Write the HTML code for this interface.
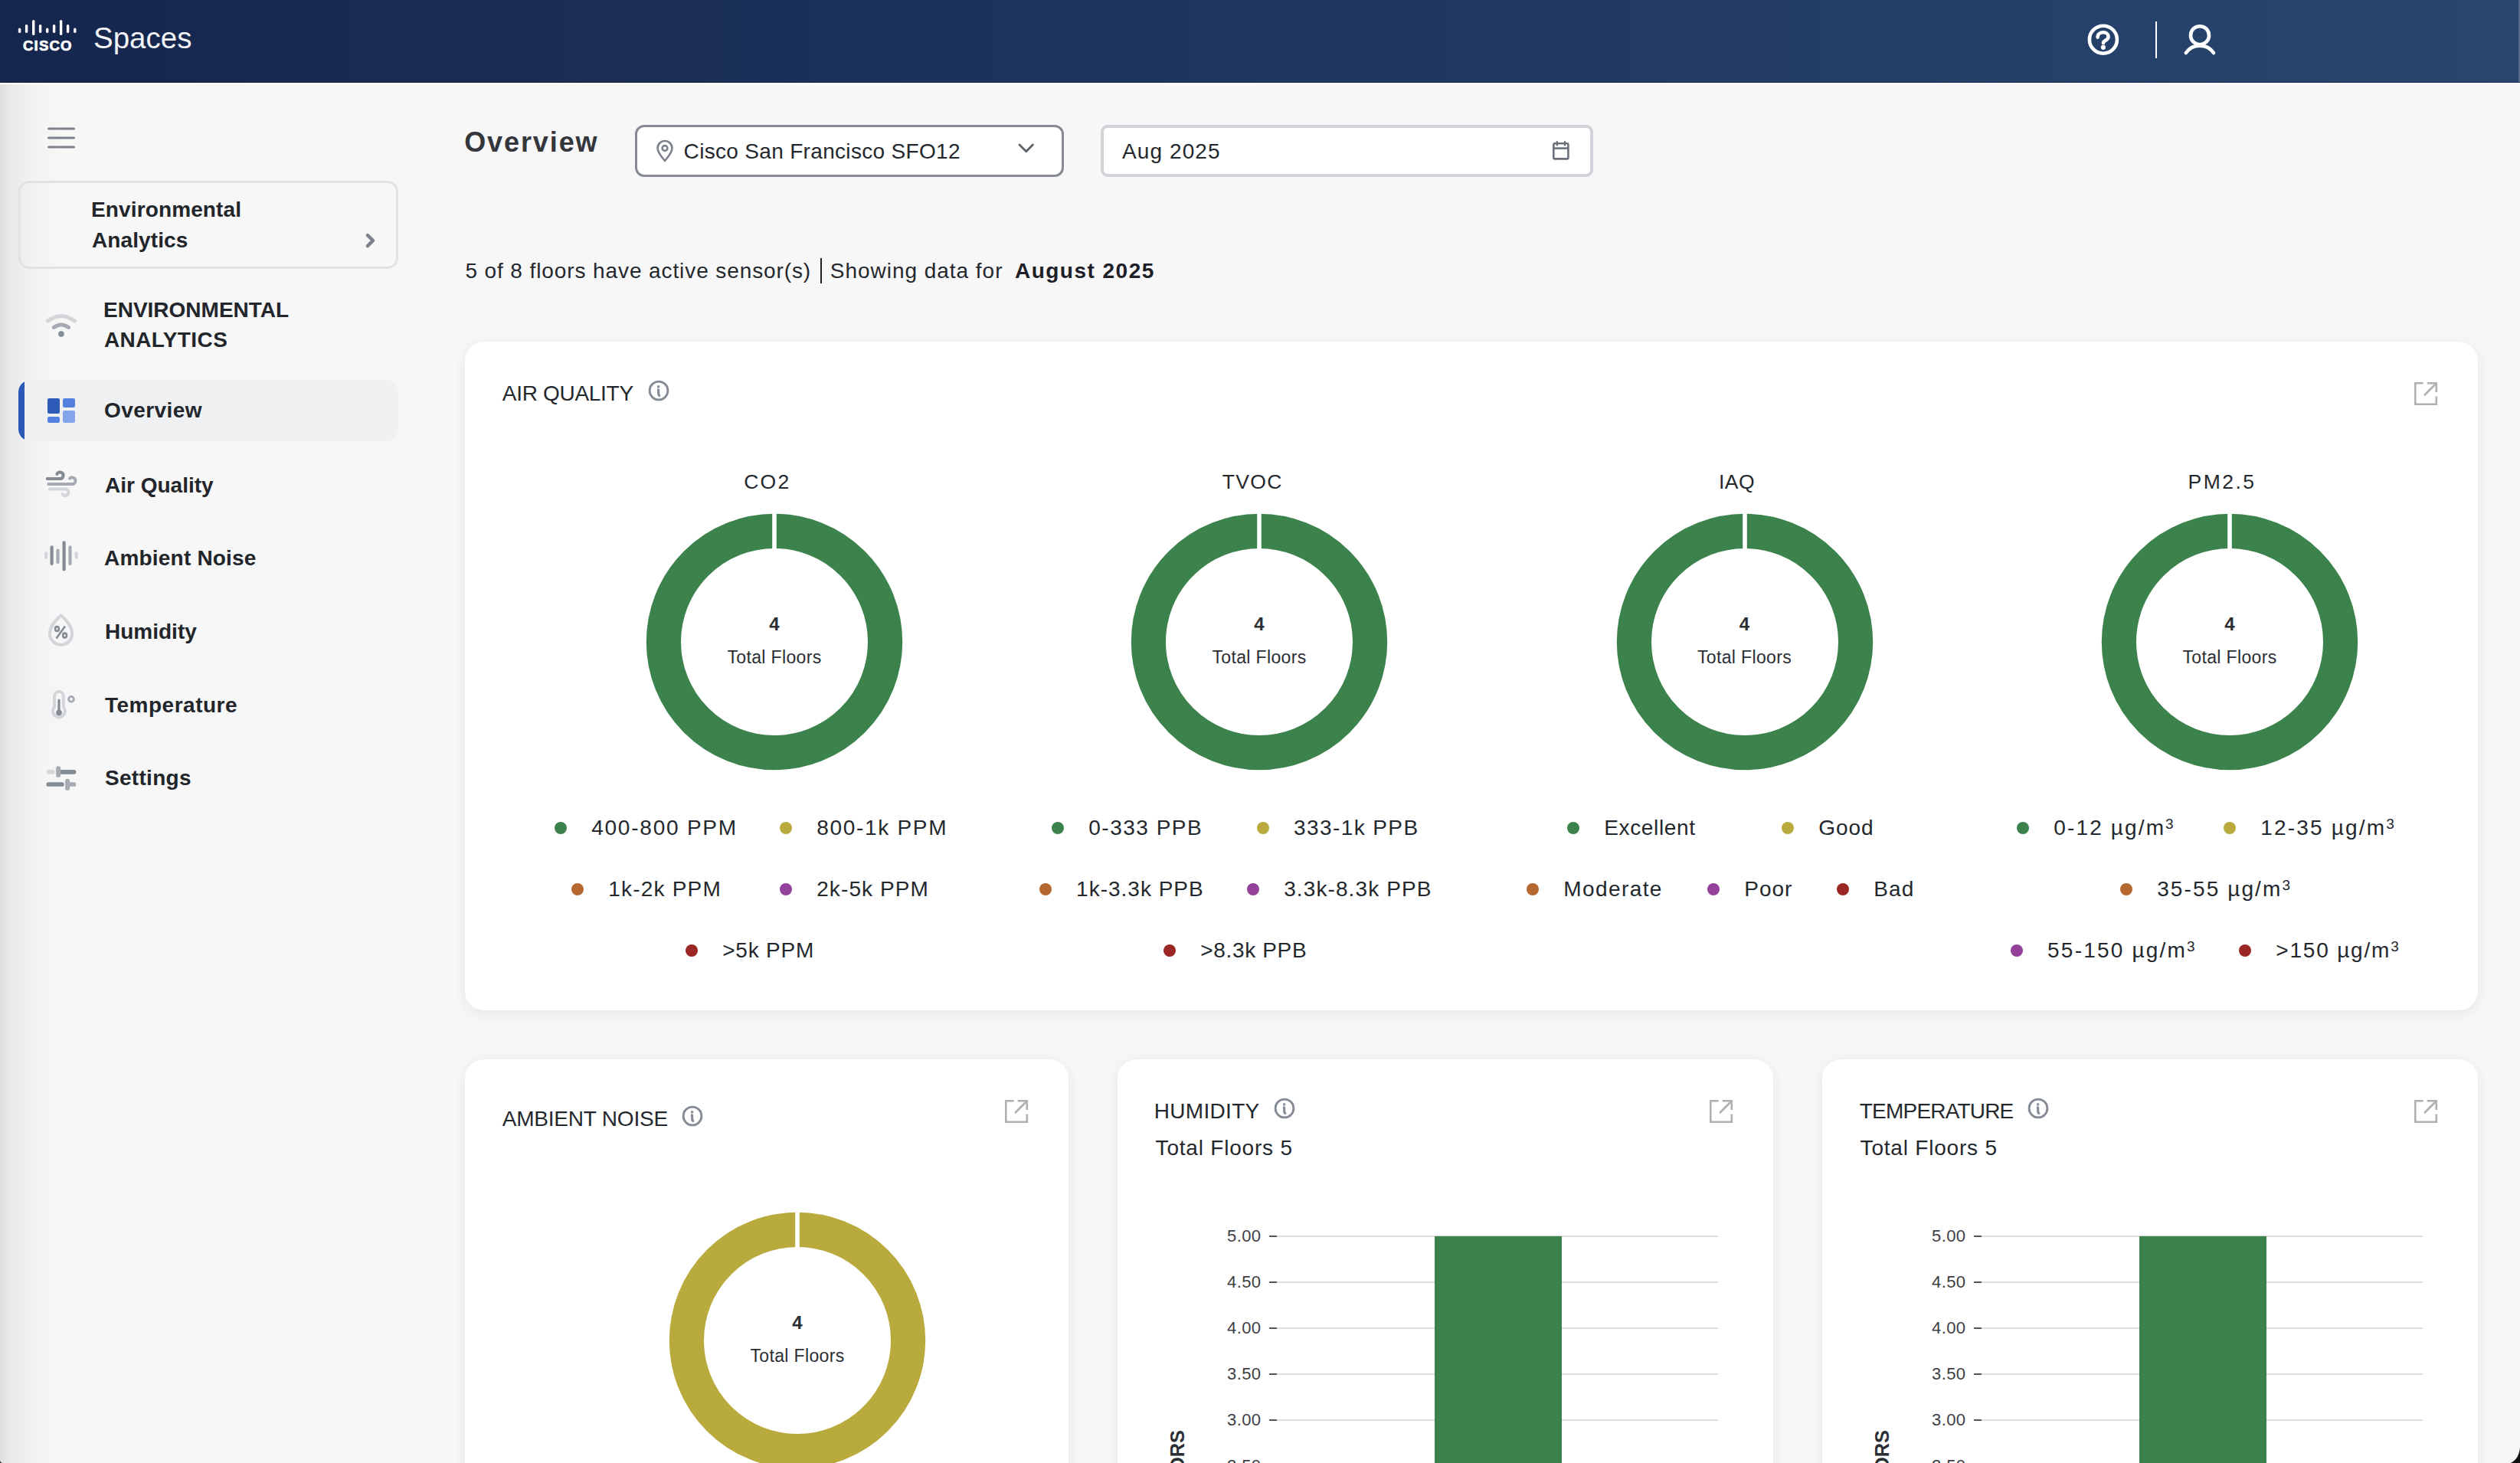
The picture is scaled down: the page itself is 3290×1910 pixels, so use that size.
<!DOCTYPE html>
<html><head><meta charset="utf-8"><title>Cisco Spaces - Overview</title>
<style>
*{box-sizing:border-box;margin:0;padding:0}
html,body{width:3290px;height:1910px;overflow:hidden;background:#f7f7f7;font-family:"Liberation Sans",sans-serif}
.t{position:absolute;line-height:1;white-space:nowrap}
.a{position:absolute}
.card{position:absolute;background:#fff;border-radius:25px;box-shadow:0 4px 18px rgba(0,0,0,0.075)}
.dot{position:absolute;width:16px;height:16px;border-radius:50%}
</style></head><body>

<div class="a" style="left:0;top:108px;width:90px;height:1802px;background:linear-gradient(90deg,#dfdfdf 0px,#eaeaea 14px,#f1f1f1 38px,#f5f5f5 60px,#f7f7f7 88px)"></div>
<div class="a" style="left:0;top:0;width:3290px;height:108px;background:linear-gradient(90deg,rgb(21,38,77),rgb(40,70,112))"></div>
<div class="a" style="left:0;top:106.5px;width:3290px;height:1.5px;background:rgba(5,15,40,0.5)"></div>
<div class="a" style="left:0;top:108px;width:3290px;height:1.5px;background:#fdfdfd"></div>
<div class="a" style="left:3288px;top:0;width:2px;height:107px;background:#576b8b"></div>
<svg class="a" style="left:0;top:0" width="120" height="108" viewBox="0 0 120 108"><line x1="25.6" y1="38.300000000000004" x2="25.6" y2="41.4" stroke="#fff" stroke-width="3.4" stroke-linecap="round"/><line x1="34.6" y1="33.6" x2="34.6" y2="41.4" stroke="#fff" stroke-width="3.4" stroke-linecap="round"/><line x1="43.7" y1="27.6" x2="43.7" y2="44.4" stroke="#fff" stroke-width="3.4" stroke-linecap="round"/><line x1="52.6" y1="33.6" x2="52.6" y2="41.4" stroke="#fff" stroke-width="3.4" stroke-linecap="round"/><line x1="61.7" y1="38.300000000000004" x2="61.7" y2="41.4" stroke="#fff" stroke-width="3.4" stroke-linecap="round"/><line x1="70.6" y1="33.6" x2="70.6" y2="41.4" stroke="#fff" stroke-width="3.4" stroke-linecap="round"/><line x1="79.6" y1="27.6" x2="79.6" y2="44.4" stroke="#fff" stroke-width="3.4" stroke-linecap="round"/><line x1="88.6" y1="33.6" x2="88.6" y2="41.4" stroke="#fff" stroke-width="3.4" stroke-linecap="round"/><line x1="97.8" y1="38.300000000000004" x2="97.8" y2="41.4" stroke="#fff" stroke-width="3.4" stroke-linecap="round"/><text x="62.3" y="65.8" text-anchor="middle" font-family="Liberation Sans" font-weight="bold" font-size="18.6" fill="#fff" stroke="#fff" stroke-width="0.7" letter-spacing="1.1">CISCO</text></svg>
<div class="t" style="top:30.7px;font-size:38.5px;font-weight:400;color:#f1f3f6;left:122.0px;">Spaces</div>
<svg class="a" style="left:2720px;top:26px" width="52" height="52" viewBox="0 0 52 52"><circle cx="25.9" cy="25.7" r="18" fill="none" stroke="#fff" stroke-width="4.6"/><path d="M18.6 22.6 C18.6 18.6 21.9 16.2 25.9 16.2 C29.9 16.2 32.6 18.8 32.6 21.9 C32.6 24.8 30.3 26 28.2 27.2 C26.8 28 26 28.8 26 30.2" fill="none" stroke="#fff" stroke-width="4.6" stroke-linecap="round"/><circle cx="25.9" cy="35.8" r="3.1" fill="#fff"/></svg>
<div class="a" style="left:2814px;top:28px;width:2.2px;height:48px;background:#fff"></div>
<svg class="a" style="left:2845px;top:26px" width="54" height="52" viewBox="0 0 54 52"><circle cx="27" cy="20.2" r="12" fill="none" stroke="#fff" stroke-width="4.6"/><path d="M8.9 43 A22 22 0 0 1 45 43" fill="none" stroke="#fff" stroke-width="4.6" stroke-linecap="round"/></svg>
<svg class="a" style="left:60px;top:162px" width="42" height="36" viewBox="0 0 42 36"><g stroke="#7d838c" stroke-width="3" stroke-linecap="round"><line x1="3.5" y1="6" x2="36.5" y2="6"/><line x1="3.5" y1="18" x2="36.5" y2="18"/><line x1="3.5" y1="30" x2="36.5" y2="30"/></g></svg>
<div class="a" style="left:24px;top:236px;width:496px;height:115px;border:3.5px solid #e1e2e6;border-radius:14px"></div>
<div class="t" style="top:260.3px;font-size:28px;font-weight:700;color:#22262b;letter-spacing:0.13px;left:119.0px;">Environmental</div>
<div class="t" style="top:300.3px;font-size:28px;font-weight:700;color:#22262b;letter-spacing:0.1px;left:120.0px;">Analytics</div>
<svg class="a" style="left:470px;top:300px" width="24" height="28" viewBox="0 0 24 28"><path d="M9.9 7.2 L17 14 L9.9 21.1" fill="none" stroke="#7b828b" stroke-width="4.5" stroke-linecap="round" stroke-linejoin="round"/></svg>
<svg class="a" style="left:56px;top:400px" width="48" height="44" viewBox="0 0 48 44"><path d="M6.4 18.9 Q23.9 6.5 41.4 18.9" fill="none" stroke="#d2d5da" stroke-width="5" stroke-linecap="round"/><path d="M14.3 27.6 Q23.9 20.5 33.5 27.6" fill="none" stroke="#a6abb3" stroke-width="5" stroke-linecap="round"/><circle cx="23.9" cy="36.1" r="3.8" fill="#848b94"/></svg>
<div class="t" style="top:390.6px;font-size:28px;font-weight:700;color:#22262b;left:135.0px;">ENVIRONMENTAL</div>
<div class="t" style="top:430.3px;font-size:28px;font-weight:700;color:#22262b;letter-spacing:0.4px;left:136.0px;">ANALYTICS</div>
<div class="a" style="left:24px;top:496px;width:496px;height:80px;background:#eff0f2;border-radius:16px;overflow:hidden"><div class="a" style="left:0;top:0;width:8px;height:80px;background:#2a58b4"></div></div>
<svg class="a" style="left:62px;top:520px" width="36" height="32" viewBox="0 0 36 32"><rect x="0" y="0" width="16" height="20" rx="2.2" fill="#2c5bb8"/><rect x="0" y="24" width="16" height="8" rx="2.2" fill="#5381dd"/><rect x="20" y="0" width="16" height="12" rx="2.2" fill="#5381dd"/><rect x="20" y="16" width="16" height="16" rx="2.2" fill="#84a5ec"/></svg>
<div class="t" style="top:522.0px;font-size:28px;font-weight:700;color:#22262b;letter-spacing:0.43px;left:136.0px;">Overview</div>
<svg class="a" style="left:50px;top:605px" width="60" height="50" viewBox="50 605 60 50"><path d="M61.7 625.1 H78.3 A4.3 4.3 0 1 0 74.4 618.9" fill="none" stroke="#848b94" stroke-width="4" stroke-linecap="round"/><path d="M63.3 632 H95.2 A4.4 4.4 0 1 0 91.1 624.6" fill="none" stroke="#a6abb3" stroke-width="4" stroke-linecap="round"/><path d="M65 638.5 H85.4 A4.3 4.3 0 1 1 81.5 645" fill="none" stroke="#d2d5da" stroke-width="4" stroke-linecap="round"/></svg>
<div class="t" style="top:620.3px;font-size:28px;font-weight:700;color:#22262b;left:137.0px;">Air Quality</div>
<svg class="a" style="left:50px;top:700px" width="60" height="52" viewBox="50 700 60 52"><line x1="60.2" y1="722.3" x2="60.2" y2="727.6" stroke="#d2d5da" stroke-width="4.2" stroke-linecap="round"/><line x1="67.6" y1="714.4" x2="67.6" y2="736.1" stroke="#848b94" stroke-width="4.2" stroke-linecap="round"/><line x1="75.5" y1="718.5" x2="75.5" y2="733.9" stroke="#a6abb3" stroke-width="4.2" stroke-linecap="round"/><line x1="83.6" y1="708.4" x2="83.6" y2="743.5" stroke="#848b94" stroke-width="4.2" stroke-linecap="round"/><line x1="91.5" y1="714.4" x2="91.5" y2="736.1" stroke="#a6abb3" stroke-width="4.2" stroke-linecap="round"/><line x1="99.6" y1="722.3" x2="99.6" y2="727.6" stroke="#d2d5da" stroke-width="4.2" stroke-linecap="round"/></svg>
<div class="t" style="top:714.9px;font-size:28px;font-weight:700;color:#22262b;letter-spacing:0.2px;left:136.0px;">Ambient Noise</div>
<svg class="a" style="left:50px;top:790px" width="60" height="60" viewBox="50 790 60 60"><path d="M79.6 803.5 C72 810 65 818 65 827.2 A14.6 14.6 0 0 0 94.2 827.2 C94.2 818 87.2 810 79.6 803.5 Z" fill="none" stroke="#d2d5da" stroke-width="4"/><ellipse cx="74.5" cy="821" rx="2.4" ry="3" fill="none" stroke="#848b94" stroke-width="2.6"/><ellipse cx="84.6" cy="829.6" rx="2.4" ry="3" fill="none" stroke="#848b94" stroke-width="2.6"/><line x1="73.5" y1="833.5" x2="85" y2="817.5" stroke="#848b94" stroke-width="2.6"/></svg>
<div class="t" style="top:811.0px;font-size:28px;font-weight:700;color:#22262b;left:137.0px;">Humidity</div>
<svg class="a" style="left:50px;top:890px" width="60" height="60" viewBox="50 890 60 60"><path d="M71 923 V909 A5.9 5.9 0 0 1 82.8 909 V923 A8 8 0 1 1 71 923 Z" fill="none" stroke="#d2d5da" stroke-width="4"/><line x1="77" y1="914" x2="77" y2="928" stroke="#848b94" stroke-width="3.2" stroke-linecap="round"/><circle cx="77" cy="930.4" r="3.8" fill="#848b94"/><circle cx="93" cy="912.8" r="3.4" fill="none" stroke="#a6abb3" stroke-width="2.8"/></svg>
<div class="t" style="top:907.3px;font-size:28px;font-weight:700;color:#22262b;letter-spacing:0.5px;left:137.0px;">Temperature</div>
<svg class="a" style="left:50px;top:990px" width="60" height="50" viewBox="50 990 60 50"><line x1="63.6" y1="1007.8" x2="68.6" y2="1007.8" stroke="#d2d5da" stroke-width="5.7" stroke-linecap="round"/><line x1="80" y1="1007.8" x2="96.5" y2="1007.8" stroke="#848b94" stroke-width="5.7" stroke-linecap="round"/><line x1="76.1" y1="1003.2" x2="76.1" y2="1011.9" stroke="#a6abb3" stroke-width="6" stroke-linecap="round"/><line x1="63.3" y1="1024" x2="80.9" y2="1024" stroke="#848b94" stroke-width="5.7" stroke-linecap="round"/><line x1="92" y1="1024" x2="96.5" y2="1024" stroke="#a6abb3" stroke-width="5.7" stroke-linecap="round"/><line x1="88.1" y1="1019.8" x2="88.1" y2="1028.9" stroke="#a6abb3" stroke-width="6" stroke-linecap="round"/></svg>
<div class="t" style="top:1002.3px;font-size:28px;font-weight:700;color:#22262b;letter-spacing:0.3px;left:137.0px;">Settings</div>
<div class="t" style="top:168.1px;font-size:36px;font-weight:700;color:#33363b;letter-spacing:1.9px;left:606.2px;">Overview</div>
<div class="a" style="left:829px;top:163px;width:560px;height:67.5px;background:#fff;border:3.6px solid #868b93;border-radius:12px"></div>
<svg class="a" style="left:850px;top:178px" width="36" height="38" viewBox="850 178 36 38"><path d="M868 210 C862 203 858.5 197.5 858.5 193.5 A9.5 9.5 0 0 1 877.5 193.5 C877.5 197.5 874 203 868 210 Z" fill="none" stroke="#7d838c" stroke-width="2.6" stroke-linejoin="round"/><circle cx="868" cy="193.5" r="3.4" fill="none" stroke="#7d838c" stroke-width="2.6"/></svg>
<div class="t" style="top:183.6px;font-size:28px;font-weight:400;color:#24282d;letter-spacing:0.32px;left:892.6px;">Cisco San Francisco SFO12</div>
<svg class="a" style="left:1325px;top:182px" width="30" height="24" viewBox="1325 182 30 24"><path d="M1331 189 L1339.7 197.8 L1348.4 189" fill="none" stroke="#5d636b" stroke-width="2.8" stroke-linecap="round" stroke-linejoin="round"/></svg>
<div class="a" style="left:1437px;top:163px;width:643px;height:68px;background:#fff;border:4px solid #d0d3d8;border-radius:9px"></div>
<div class="t" style="top:183.8px;font-size:28px;font-weight:400;color:#24282d;letter-spacing:1.1px;left:1465.0px;">Aug 2025</div>
<svg class="a" style="left:2020px;top:179.3px" width="36" height="36" viewBox="2020 178 36 36"><rect x="2028.3" y="186.3" width="19.1" height="20.1" rx="1.6" fill="none" stroke="#6b717b" stroke-width="2.6"/><line x1="2028.3" y1="192.6" x2="2047.4" y2="192.6" stroke="#6b717b" stroke-width="2.6"/><line x1="2032.8" y1="184.3" x2="2032.8" y2="188.3" stroke="#6b717b" stroke-width="2.4" stroke-linecap="round"/><line x1="2043" y1="184.3" x2="2043" y2="188.3" stroke="#6b717b" stroke-width="2.4" stroke-linecap="round"/></svg>
<div class="t" style="top:340.2px;font-size:28px;font-weight:400;color:#24282d;letter-spacing:0.9px;left:607.4px;">5 of 8 floors have active sensor(s)</div>
<div class="a" style="left:1070.6px;top:337px;width:2.4px;height:33px;background:#1d2127"></div>
<div class="t" style="top:340.2px;font-size:28px;font-weight:400;color:#24282d;letter-spacing:0.97px;left:1083.8px;">Showing data for</div>
<div class="t" style="top:340.2px;font-size:28px;font-weight:700;color:#1d2127;letter-spacing:1.48px;left:1325.0px;">August 2025</div>
<div class="card" style="left:607px;top:446px;width:2628px;height:873px"></div>
<div class="t" style="top:500.4px;font-size:28px;font-weight:400;color:#24282d;letter-spacing:-0.3px;left:655.8px;">AIR QUALITY</div>
<svg class="a" style="left:843.9px;top:493.9px" width="32" height="32" viewBox="0 0 32 32"><circle cx="16" cy="16" r="11.9" fill="none" stroke="#858c95" stroke-width="2.9"/><rect x="14.1" y="9.3" width="3.1" height="3.1" fill="#858c95"/><path d="M14 14.5 L15.6 14.9 L15.7 20.3 Q15.9 22.3 18 22.9" fill="none" stroke="#858c95" stroke-width="3.1" stroke-linejoin="round"/></svg>
<svg class="a" style="left:3152px;top:498.5px" width="31" height="31" viewBox="0 0 31 31"><path d="M11.6 1.25 H1.25 V28.8 H28.8 V18.4" fill="none" stroke="#b0b0b0" stroke-width="2.6"/><path d="M16.8 1.25 H28.8 V13.1" fill="none" stroke="#b0b0b0" stroke-width="2.6"/><line x1="27.6" y1="2.4" x2="13.9" y2="16.2" stroke="#b0b0b0" stroke-width="2.8" stroke-linecap="round"/></svg>
<svg class="a" style="left:841px;top:667.7px" width="340" height="340" viewBox="-170 -170 340 340"><circle cx="0" cy="0" r="144.6" fill="none" stroke="#3c824c" stroke-width="45.19999999999999"/><rect x="-2.8" y="-169" width="5.6" height="50" fill="#fff"/></svg>
<div class="t" style="top:802.9px;font-size:24px;font-weight:700;color:#2b2e33;left:411.0px;width:1200px;text-align:center;">4</div>
<div class="t" style="top:846.9px;font-size:23px;font-weight:400;color:#2b2e33;letter-spacing:0.35px;left:411.0px;width:1200px;text-align:center;">Total Floors</div>
<div class="t" style="top:615.5px;font-size:26.5px;font-weight:400;color:#24282d;letter-spacing:2.3px;left:401.9px;width:1200px;text-align:center;">CO2</div>
<svg class="a" style="left:1474px;top:667.7px" width="340" height="340" viewBox="-170 -170 340 340"><circle cx="0" cy="0" r="144.6" fill="none" stroke="#3c824c" stroke-width="45.19999999999999"/><rect x="-2.8" y="-169" width="5.6" height="50" fill="#fff"/></svg>
<div class="t" style="top:802.9px;font-size:24px;font-weight:700;color:#2b2e33;left:1044.0px;width:1200px;text-align:center;">4</div>
<div class="t" style="top:846.9px;font-size:23px;font-weight:400;color:#2b2e33;letter-spacing:0.35px;left:1044.0px;width:1200px;text-align:center;">Total Floors</div>
<div class="t" style="top:615.5px;font-size:26.5px;font-weight:400;color:#24282d;letter-spacing:1.3px;left:1035.2px;width:1200px;text-align:center;">TVOC</div>
<svg class="a" style="left:2107.5px;top:667.7px" width="340" height="340" viewBox="-170 -170 340 340"><circle cx="0" cy="0" r="144.6" fill="none" stroke="#3c824c" stroke-width="45.19999999999999"/><rect x="-2.8" y="-169" width="5.6" height="50" fill="#fff"/></svg>
<div class="t" style="top:802.9px;font-size:24px;font-weight:700;color:#2b2e33;left:1677.5px;width:1200px;text-align:center;">4</div>
<div class="t" style="top:846.9px;font-size:23px;font-weight:400;color:#2b2e33;letter-spacing:0.35px;left:1677.5px;width:1200px;text-align:center;">Total Floors</div>
<div class="t" style="top:615.5px;font-size:26.5px;font-weight:400;color:#24282d;letter-spacing:0.4px;left:1667.5px;width:1200px;text-align:center;">IAQ</div>
<svg class="a" style="left:2741px;top:667.7px" width="340" height="340" viewBox="-170 -170 340 340"><circle cx="0" cy="0" r="144.6" fill="none" stroke="#3c824c" stroke-width="45.19999999999999"/><rect x="-2.8" y="-169" width="5.6" height="50" fill="#fff"/></svg>
<div class="t" style="top:802.9px;font-size:24px;font-weight:700;color:#2b2e33;left:2311.0px;width:1200px;text-align:center;">4</div>
<div class="t" style="top:846.9px;font-size:23px;font-weight:400;color:#2b2e33;letter-spacing:0.35px;left:2311.0px;width:1200px;text-align:center;">Total Floors</div>
<div class="t" style="top:615.5px;font-size:26.5px;font-weight:400;color:#24282d;letter-spacing:2.5px;left:2301.0px;width:1200px;text-align:center;">PM2.5</div>
<div class="dot" style="left:724.0px;top:1072.9px;background:#3c824c"></div>
<div class="t" style="top:1067.4px;font-size:28px;font-weight:400;color:#24282d;letter-spacing:1.77px;left:772.2px;">400-800 PPM</div>
<div class="dot" style="left:1018.0px;top:1072.9px;background:#b8aa3c"></div>
<div class="t" style="top:1067.4px;font-size:28px;font-weight:400;color:#24282d;letter-spacing:1.7px;left:1066.2px;">800-1k PPM</div>
<div class="dot" style="left:746.0px;top:1152.7px;background:#b4672e"></div>
<div class="t" style="top:1147.2px;font-size:28px;font-weight:400;color:#24282d;letter-spacing:1.2px;left:794.2px;">1k-2k PPM</div>
<div class="dot" style="left:1018.0px;top:1152.7px;background:#93419a"></div>
<div class="t" style="top:1147.2px;font-size:28px;font-weight:400;color:#24282d;letter-spacing:1.1px;left:1066.2px;">2k-5k PPM</div>
<div class="dot" style="left:895.0px;top:1232.7px;background:#9a2723"></div>
<div class="t" style="top:1227.2px;font-size:28px;font-weight:400;color:#24282d;letter-spacing:0.8px;left:943.2px;">&gt;5k PPM</div>
<div class="dot" style="left:1373.1px;top:1072.9px;background:#3c824c"></div>
<div class="t" style="top:1067.4px;font-size:28px;font-weight:400;color:#24282d;letter-spacing:1.5px;left:1421.3px;">0-333 PPB</div>
<div class="dot" style="left:1640.9px;top:1072.9px;background:#b8aa3c"></div>
<div class="t" style="top:1067.4px;font-size:28px;font-weight:400;color:#24282d;letter-spacing:1.4px;left:1689.1px;">333-1k PPB</div>
<div class="dot" style="left:1356.9px;top:1152.7px;background:#b4672e"></div>
<div class="t" style="top:1147.2px;font-size:28px;font-weight:400;color:#24282d;letter-spacing:1.0px;left:1405.1px;">1k-3.3k PPB</div>
<div class="dot" style="left:1628.0px;top:1152.7px;background:#93419a"></div>
<div class="t" style="top:1147.2px;font-size:28px;font-weight:400;color:#24282d;letter-spacing:1.1px;left:1676.2px;">3.3k-8.3k PPB</div>
<div class="dot" style="left:1519.1px;top:1232.7px;background:#9a2723"></div>
<div class="t" style="top:1227.2px;font-size:28px;font-weight:400;color:#24282d;letter-spacing:0.65px;left:1567.3px;">&gt;8.3k PPB</div>
<div class="dot" style="left:2046.0px;top:1072.9px;background:#3c824c"></div>
<div class="t" style="top:1067.4px;font-size:28px;font-weight:400;color:#24282d;letter-spacing:0.65px;left:2094.2px;">Excellent</div>
<div class="dot" style="left:2326.0px;top:1072.9px;background:#b8aa3c"></div>
<div class="t" style="top:1067.4px;font-size:28px;font-weight:400;color:#24282d;letter-spacing:1.0px;left:2374.2px;">Good</div>
<div class="dot" style="left:1993.1px;top:1152.7px;background:#b4672e"></div>
<div class="t" style="top:1147.2px;font-size:28px;font-weight:400;color:#24282d;letter-spacing:1.4px;left:2041.3px;">Moderate</div>
<div class="dot" style="left:2229.1px;top:1152.7px;background:#93419a"></div>
<div class="t" style="top:1147.2px;font-size:28px;font-weight:400;color:#24282d;letter-spacing:1.0px;left:2277.3px;">Poor</div>
<div class="dot" style="left:2398.0px;top:1152.7px;background:#9a2723"></div>
<div class="t" style="top:1147.2px;font-size:28px;font-weight:400;color:#24282d;letter-spacing:1.2px;left:2446.2px;">Bad</div>
<div class="dot" style="left:2633.1px;top:1072.9px;background:#3c824c"></div>
<div class="t" style="top:1067.4px;font-size:28px;font-weight:400;color:#24282d;letter-spacing:2.13px;left:2681.3px;">0-12 µg/m<span style="font-size:19px;position:relative;top:-8.5px;letter-spacing:0">3</span></div>
<div class="dot" style="left:2903.1px;top:1072.9px;background:#b8aa3c"></div>
<div class="t" style="top:1067.4px;font-size:28px;font-weight:400;color:#24282d;letter-spacing:2.17px;left:2951.3px;">12-35 µg/m<span style="font-size:19px;position:relative;top:-8.5px;letter-spacing:0">3</span></div>
<div class="dot" style="left:2768.0px;top:1152.7px;background:#b4672e"></div>
<div class="t" style="top:1147.2px;font-size:28px;font-weight:400;color:#24282d;letter-spacing:2.1px;left:2816.2px;">35-55 µg/m<span style="font-size:19px;position:relative;top:-8.5px;letter-spacing:0">3</span></div>
<div class="dot" style="left:2624.9px;top:1232.7px;background:#93419a"></div>
<div class="t" style="top:1227.2px;font-size:28px;font-weight:400;color:#24282d;letter-spacing:2.2px;left:2673.1px;">55-150 µg/m<span style="font-size:19px;position:relative;top:-8.5px;letter-spacing:0">3</span></div>
<div class="dot" style="left:2923.1px;top:1232.7px;background:#9a2723"></div>
<div class="t" style="top:1227.2px;font-size:28px;font-weight:400;color:#24282d;letter-spacing:1.8px;left:2971.3px;">&gt;150 µg/m<span style="font-size:19px;position:relative;top:-8.5px;letter-spacing:0">3</span></div>
<div class="card" style="left:607px;top:1383px;width:788px;height:620px"></div>
<div class="card" style="left:1459px;top:1383px;width:856px;height:620px"></div>
<div class="card" style="left:2379px;top:1383px;width:856px;height:620px"></div>
<div class="t" style="top:1447.3px;font-size:28px;font-weight:400;color:#24282d;letter-spacing:-0.2px;left:655.7px;">AMBIENT NOISE</div>
<svg class="a" style="left:887.8px;top:1440.8px" width="32" height="32" viewBox="0 0 32 32"><circle cx="16" cy="16" r="11.9" fill="none" stroke="#858c95" stroke-width="2.9"/><rect x="14.1" y="9.3" width="3.1" height="3.1" fill="#858c95"/><path d="M14 14.5 L15.6 14.9 L15.7 20.3 Q15.9 22.3 18 22.9" fill="none" stroke="#858c95" stroke-width="3.1" stroke-linejoin="round"/></svg>
<svg class="a" style="left:1311.5px;top:1435.5px" width="31" height="31" viewBox="0 0 31 31"><path d="M11.6 1.25 H1.25 V28.8 H28.8 V18.4" fill="none" stroke="#b0b0b0" stroke-width="2.6"/><path d="M16.8 1.25 H28.8 V13.1" fill="none" stroke="#b0b0b0" stroke-width="2.6"/><line x1="27.6" y1="2.4" x2="13.9" y2="16.2" stroke="#b0b0b0" stroke-width="2.8" stroke-linecap="round"/></svg>
<svg class="a" style="left:871px;top:1580px" width="340" height="340" viewBox="-170 -170 340 340"><circle cx="0" cy="0" r="144.6" fill="none" stroke="#b8aa3c" stroke-width="45.19999999999999"/><rect x="-2.8" y="-169" width="5.6" height="50" fill="#fff"/></svg>
<div class="t" style="top:1715.2px;font-size:24px;font-weight:700;color:#2b2e33;left:441.0px;width:1200px;text-align:center;">4</div>
<div class="t" style="top:1759.2px;font-size:23px;font-weight:400;color:#2b2e33;letter-spacing:0.35px;left:441.0px;width:1200px;text-align:center;">Total Floors</div>
<div class="t" style="top:1437.1px;font-size:28px;font-weight:400;color:#24282d;letter-spacing:0.3px;left:1506.8px;">HUMIDITY</div>
<div class="t" style="top:1485.2px;font-size:28px;font-weight:400;color:#24282d;letter-spacing:0.8px;left:1508.6px;">Total Floors 5</div>
<svg class="a" style="left:2232px;top:1435.5px" width="31" height="31" viewBox="0 0 31 31"><path d="M11.6 1.25 H1.25 V28.8 H28.8 V18.4" fill="none" stroke="#b0b0b0" stroke-width="2.6"/><path d="M16.8 1.25 H28.8 V13.1" fill="none" stroke="#b0b0b0" stroke-width="2.6"/><line x1="27.6" y1="2.4" x2="13.9" y2="16.2" stroke="#b0b0b0" stroke-width="2.8" stroke-linecap="round"/></svg>
<div class="a" style="left:1667px;top:1612.8px;width:576px;height:2px;background:#dcdcdc"></div>
<div class="a" style="left:1657px;top:1612.8px;width:10px;height:2px;background:#555"></div>
<div class="t" style="top:1603.1px;font-size:22px;font-weight:400;color:#3d4045;letter-spacing:0.35px;left:446.3px;width:1200px;text-align:right;">5.00</div>
<div class="a" style="left:1667px;top:1672.8px;width:576px;height:2px;background:#dcdcdc"></div>
<div class="a" style="left:1657px;top:1672.8px;width:10px;height:2px;background:#555"></div>
<div class="t" style="top:1663.1px;font-size:22px;font-weight:400;color:#3d4045;letter-spacing:0.35px;left:446.3px;width:1200px;text-align:right;">4.50</div>
<div class="a" style="left:1667px;top:1732.8px;width:576px;height:2px;background:#dcdcdc"></div>
<div class="a" style="left:1657px;top:1732.8px;width:10px;height:2px;background:#555"></div>
<div class="t" style="top:1723.1px;font-size:22px;font-weight:400;color:#3d4045;letter-spacing:0.35px;left:446.3px;width:1200px;text-align:right;">4.00</div>
<div class="a" style="left:1667px;top:1792.8px;width:576px;height:2px;background:#dcdcdc"></div>
<div class="a" style="left:1657px;top:1792.8px;width:10px;height:2px;background:#555"></div>
<div class="t" style="top:1783.1px;font-size:22px;font-weight:400;color:#3d4045;letter-spacing:0.35px;left:446.3px;width:1200px;text-align:right;">3.50</div>
<div class="a" style="left:1667px;top:1852.8px;width:576px;height:2px;background:#dcdcdc"></div>
<div class="a" style="left:1657px;top:1852.8px;width:10px;height:2px;background:#555"></div>
<div class="t" style="top:1843.1px;font-size:22px;font-weight:400;color:#3d4045;letter-spacing:0.35px;left:446.3px;width:1200px;text-align:right;">3.00</div>
<div class="a" style="left:1667px;top:1912.8px;width:576px;height:2px;background:#dcdcdc"></div>
<div class="a" style="left:1657px;top:1912.8px;width:10px;height:2px;background:#555"></div>
<div class="t" style="top:1903.1px;font-size:22px;font-weight:400;color:#3d4045;letter-spacing:0.35px;left:446.3px;width:1200px;text-align:right;">2.50</div>
<div class="a" style="left:1873px;top:1613.8px;width:166px;height:400px;background:#3c824c"></div>
<div class="t" style="left:1525.1px;top:2166.6px;width:300px;text-align:right;font-size:25.4px;font-weight:700;color:#2b2e33;transform-origin:0 0;transform:rotate(-90deg)">FLOORS</div>
<svg class="a" style="left:1661px;top:1430.8px" width="32" height="32" viewBox="0 0 32 32"><circle cx="16" cy="16" r="11.9" fill="none" stroke="#858c95" stroke-width="2.9"/><rect x="14.1" y="9.3" width="3.1" height="3.1" fill="#858c95"/><path d="M14 14.5 L15.6 14.9 L15.7 20.3 Q15.9 22.3 18 22.9" fill="none" stroke="#858c95" stroke-width="3.1" stroke-linejoin="round"/></svg>
<div class="t" style="top:1437.1px;font-size:28px;font-weight:400;color:#24282d;letter-spacing:-0.8px;left:2427.8px;">TEMPERATURE</div>
<div class="t" style="top:1485.2px;font-size:28px;font-weight:400;color:#24282d;letter-spacing:0.8px;left:2428.6px;">Total Floors 5</div>
<svg class="a" style="left:3152px;top:1435.5px" width="31" height="31" viewBox="0 0 31 31"><path d="M11.6 1.25 H1.25 V28.8 H28.8 V18.4" fill="none" stroke="#b0b0b0" stroke-width="2.6"/><path d="M16.8 1.25 H28.8 V13.1" fill="none" stroke="#b0b0b0" stroke-width="2.6"/><line x1="27.6" y1="2.4" x2="13.9" y2="16.2" stroke="#b0b0b0" stroke-width="2.8" stroke-linecap="round"/></svg>
<div class="a" style="left:2587px;top:1612.8px;width:576px;height:2px;background:#dcdcdc"></div>
<div class="a" style="left:2577px;top:1612.8px;width:10px;height:2px;background:#555"></div>
<div class="t" style="top:1603.1px;font-size:22px;font-weight:400;color:#3d4045;letter-spacing:0.35px;left:1366.3px;width:1200px;text-align:right;">5.00</div>
<div class="a" style="left:2587px;top:1672.8px;width:576px;height:2px;background:#dcdcdc"></div>
<div class="a" style="left:2577px;top:1672.8px;width:10px;height:2px;background:#555"></div>
<div class="t" style="top:1663.1px;font-size:22px;font-weight:400;color:#3d4045;letter-spacing:0.35px;left:1366.3px;width:1200px;text-align:right;">4.50</div>
<div class="a" style="left:2587px;top:1732.8px;width:576px;height:2px;background:#dcdcdc"></div>
<div class="a" style="left:2577px;top:1732.8px;width:10px;height:2px;background:#555"></div>
<div class="t" style="top:1723.1px;font-size:22px;font-weight:400;color:#3d4045;letter-spacing:0.35px;left:1366.3px;width:1200px;text-align:right;">4.00</div>
<div class="a" style="left:2587px;top:1792.8px;width:576px;height:2px;background:#dcdcdc"></div>
<div class="a" style="left:2577px;top:1792.8px;width:10px;height:2px;background:#555"></div>
<div class="t" style="top:1783.1px;font-size:22px;font-weight:400;color:#3d4045;letter-spacing:0.35px;left:1366.3px;width:1200px;text-align:right;">3.50</div>
<div class="a" style="left:2587px;top:1852.8px;width:576px;height:2px;background:#dcdcdc"></div>
<div class="a" style="left:2577px;top:1852.8px;width:10px;height:2px;background:#555"></div>
<div class="t" style="top:1843.1px;font-size:22px;font-weight:400;color:#3d4045;letter-spacing:0.35px;left:1366.3px;width:1200px;text-align:right;">3.00</div>
<div class="a" style="left:2587px;top:1912.8px;width:576px;height:2px;background:#dcdcdc"></div>
<div class="a" style="left:2577px;top:1912.8px;width:10px;height:2px;background:#555"></div>
<div class="t" style="top:1903.1px;font-size:22px;font-weight:400;color:#3d4045;letter-spacing:0.35px;left:1366.3px;width:1200px;text-align:right;">2.50</div>
<div class="a" style="left:2793px;top:1613.8px;width:166px;height:400px;background:#3c824c"></div>
<div class="t" style="left:2445.1px;top:2166.6px;width:300px;text-align:right;font-size:25.4px;font-weight:700;color:#2b2e33;transform-origin:0 0;transform:rotate(-90deg)">FLOORS</div>
<svg class="a" style="left:2644.8px;top:1430.8px" width="32" height="32" viewBox="0 0 32 32"><circle cx="16" cy="16" r="11.9" fill="none" stroke="#858c95" stroke-width="2.9"/><rect x="14.1" y="9.3" width="3.1" height="3.1" fill="#858c95"/><path d="M14 14.5 L15.6 14.9 L15.7 20.3 Q15.9 22.3 18 22.9" fill="none" stroke="#858c95" stroke-width="3.1" stroke-linejoin="round"/></svg>
<svg class="a" style="left:3260px;top:1880px" width="30" height="30" viewBox="3260 1880 30 30"><path d="M3290 1889 C3289.5 1899 3285 1907 3277.5 1910 H3290 Z" fill="#111"/></svg>
<svg class="a" style="left:0;top:1900px" width="10" height="10" viewBox="0 0 10 10"><path d="M0 6 A4 4 0 0 0 4 10 H0 Z" fill="#222"/></svg>
</body></html>
